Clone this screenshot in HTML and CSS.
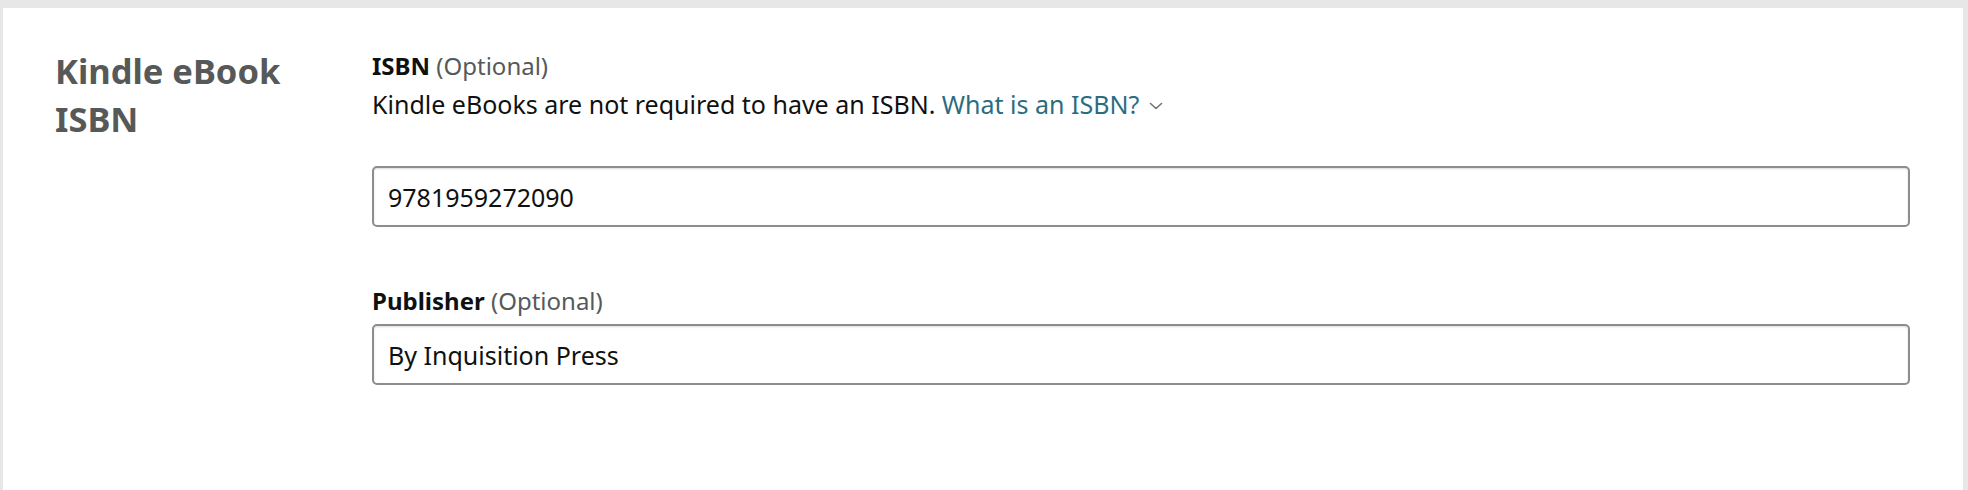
FILE: index.html
```html
<!DOCTYPE html>
<html lang="en">
<head>
<meta charset="utf-8">
<title>Kindle eBook ISBN</title>
<link rel="stylesheet" href="styles.css">
</head>
<body>
  <div class="panel">
    <section class="section">
      <h2 class="section-title">Kindle eBook ISBN</h2>
      <div class="fields">
        <div class="field field-isbn">
          <div class="label"><span class="label-name">ISBN</span> <span class="optional">(Optional)</span></div>
          <div class="help">Kindle eBooks are not required to have an ISBN. <a class="link" href="#">What is an ISBN?</a><svg class="chevron" width="14" height="8" viewBox="0 0 14 8" aria-hidden="true"><path d="M1.5 1.5 L7 6.5 L12.5 1.5" fill="none" stroke="#6f7373" stroke-width="1.6" stroke-linecap="round" stroke-linejoin="round"/></svg></div>
          <input class="input" type="text" value="9781959272090">
        </div>
        <div class="field field-publisher">
          <div class="label"><span class="label-name">Publisher</span> <span class="optional">(Optional)</span></div>
          <input class="input" type="text" value="By Inquisition Press">
        </div>
      </div>
    </section>
  </div>
</body>
</html>
```

FILE: styles.css
```css
html, body {
  margin: 0;
  padding: 0;
}

body {
  background: #e7e7e7;
  padding: 8px 5px 0 3px;
  font-family: "Noto Sans", "Open Sans", Arial, sans-serif;
  color: #0f1111;
}

.panel {
  background: #ffffff;
  min-height: 482px;
  box-sizing: border-box;
  padding: 39px 53px 0 52px;
}

.section {
  display: grid;
  grid-template-columns: 262px 1fr;
  column-gap: 55px;
}

.section-title {
  margin: 0;
  font-size: 34.5px;
  line-height: 48px;
  font-weight: 700;
  color: #575959;
}

.fields {
  padding-top: 4px;
}

.label {
  font-size: 24px;
  line-height: 30px;
}

.label-name {
  font-weight: 700;
}

.optional {
  color: #565959;
}

.help {
  margin-top: 5px;
  font-size: 25px;
  line-height: 36px;
  display: flex;
  align-items: center;
  white-space: pre;
}

.link {
  color: #2c6c80;
  text-decoration: none;
}

.chevron {
  margin-left: 10px;
  margin-top: 3px;
}

.input {
  display: block;
  width: 100%;
  box-sizing: border-box;
  height: 61px;
  margin: 44px 0 0;
  padding: 0 14px;
  border: 2px solid #8a8e8e;
  border-radius: 5px;
  box-shadow: inset 0 1px 2px rgba(15, 17, 17, 0.15);
  font-family: inherit;
  font-size: 25px;
  color: #0f1111;
  background: #fff;
  outline: none;
}

.field-publisher {
  margin-top: 59px;
}

.field-publisher .input {
  margin-top: 8px;
}
```
